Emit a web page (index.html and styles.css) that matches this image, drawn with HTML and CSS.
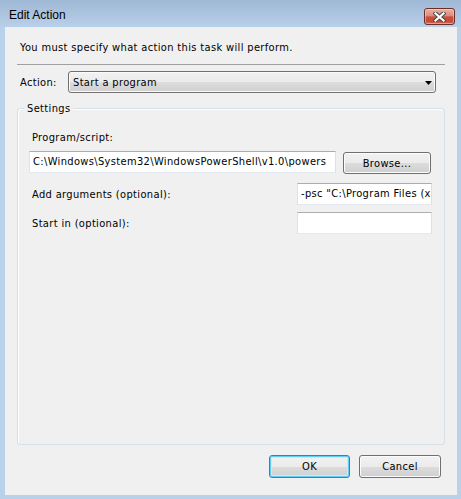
FILE: index.html
```html
<!DOCTYPE html>
<html>
<head>
<meta charset="utf-8">
<title>Edit Action</title>
<link rel="stylesheet" href="styles.css">
</head>
<body>
<div class="window">
  <div class="titlebar">
    <span class="title">Edit Action</span>
    <div class="close">
      <svg width="13" height="10" viewBox="0 0 13 10">
        <path d="M2.5 1.5 L10.5 8.5 M10.5 1.5 L2.5 8.5" stroke="#4a4a4a" stroke-width="4.2" stroke-linecap="square" fill="none"/>
        <path d="M2.5 1.5 L10.5 8.5 M10.5 1.5 L2.5 8.5" stroke="#ffffff" stroke-width="2.2" stroke-linecap="square" fill="none"/>
      </svg>
    </div>
  </div>
  <div class="client">
    <p class="instr">You must specify what action this task will perform.</p>
    <div class="sep"></div>
    <div class="action-row">
      <span class="action-lbl">Action:</span>
      <div class="combo">
        <span class="combo-text">Start a program</span>
        <svg class="combo-arrow" width="7" height="4" viewBox="0 0 7 4"><polygon points="0,0 7,0 3.5,4" fill="#000"/></svg>
      </div>
    </div>
    <div class="group">
      <span class="group-label">Settings</span>
      <div class="prog-lbl">Program/script:</div>
      <div class="prog-row">
        <div class="textbox prog-box">C:\Windows\System32\WindowsPowerShell\v1.0\powers</div>
        <div class="btn browse">Browse...</div>
      </div>
      <div class="field-row args-row">
        <span class="field-lbl">Add arguments (optional):</span>
        <div class="textbox side-box">-psc "C:\Program Files (x</div>
      </div>
      <div class="field-row start-row">
        <span class="field-lbl">Start in (optional):</span>
        <div class="textbox side-box"></div>
      </div>
    </div>
    <div class="buttons">
      <div class="btn ok">OK</div>
      <div class="btn cancel">Cancel</div>
    </div>
  </div>
</div>
</body>
</html>
```

FILE: styles.css
```css
html, body {
  margin: 0;
  padding: 0;
}
body {
  width: 461px;
  height: 499px;
  overflow: hidden;
  font-family: "DejaVu Sans Condensed", "DejaVu Sans", sans-serif;
  color: #000;
}
.window {
  width: 461px;
  height: 499px;
  background: #bad1ea;
  display: flex;
  flex-direction: column;
}
.titlebar {
  height: 27px;
  box-sizing: border-box;
  padding: 8px 6px 0 9px;
  display: flex;
  align-items: flex-start;
  background: linear-gradient(to bottom, #9fb8d5 0%, #aec6e1 60%, #b9d0ea 100%);
}
.title {
  font-family: "Liberation Sans", Arial, sans-serif;
  font-size: 12px;
  line-height: 14px;
  color: #000;
}
.close {
  margin-left: auto;
  width: 31px;
  height: 17px;
  box-sizing: border-box;
  border: 1px solid #6b2f2a;
  border-radius: 3px;
  background: linear-gradient(to bottom, #eab2a6 0%, #db8c7c 45%, #c8533f 52%, #c24b38 80%, #d06a55 100%);
  box-shadow: inset 0 0 0 1px rgba(255, 230, 220, 0.45);
  display: flex;
  align-items: center;
  justify-content: center;
}
.close svg {
  display: block;
}
.client {
  margin: 0 4px 0 5px;
  height: 468px;
  box-sizing: border-box;
  background: #f0f0f0;
  padding-top: 14px;
  font-size: 11px;
  letter-spacing: 0.35px;
}
.instr {
  margin: 0 0 0 15px;
  line-height: 13px;
}
.sep {
  margin: 10px 12px 0;
  border-top: 1px solid #a0a0a0;
}
.action-row {
  display: flex;
  align-items: center;
  margin: 6px 0 0 15px;
  height: 22px;
}
.action-lbl {
  width: 48px;
  line-height: 13px;
}
.combo {
  width: 368px;
  height: 22px;
  box-sizing: border-box;
  border: 1px solid #707070;
  border-radius: 3px;
  background: linear-gradient(to bottom, #f2f2f2 0%, #ebebeb 50%, #dddddd 50%, #cfcfcf 100%);
  box-shadow: inset 0 0 0 1px #fbfbfb;
  display: flex;
  align-items: center;
  padding: 0 3px 0 4px;
}
.combo-text {
  line-height: 13px;
}
.combo-arrow {
  margin-left: auto;
  display: block;
  margin-top: 1px;
}
.group {
  position: relative;
  margin: 15px 12px 0;
  height: 337px;
  box-sizing: border-box;
  border: 1px solid #d5dfe5;
  border-radius: 3px;
  box-shadow: inset 1px 1px 0 #ffffff;
  padding: 22px 12px 0 11px;
}
.group-label {
  position: absolute;
  top: -7px;
  left: 6px;
  padding: 0 3px;
  line-height: 13px;
  background: #f0f0f0;
}
.prog-lbl {
  margin-left: 3px;
  line-height: 13px;
}
.prog-row {
  display: flex;
  align-items: flex-start;
  margin-top: 7px;
}
.textbox {
  height: 22px;
  box-sizing: border-box;
  border: 1px solid;
  border-color: #abadb3 #dbdfe6 #e3e9ef #e2e3ea;
  background: #ffffff;
  white-space: nowrap;
  overflow: hidden;
  line-height: 20px;
  padding: 0 2px 0 3px;
}
.prog-box {
  width: 307px;
}
.browse {
  width: 88px;
  height: 22px;
  margin-left: 7px;
  margin-top: 1px;
}
.field-row {
  display: flex;
  justify-content: space-between;
  align-items: flex-start;
}
.args-row {
  margin-top: 9px;
}
.start-row {
  margin-top: 7px;
}
.field-lbl {
  margin-left: 3px;
  padding-top: 5px;
  line-height: 13px;
}
.side-box {
  width: 135px;
}
.btn {
  box-sizing: border-box;
  border: 1px solid #707070;
  border-radius: 3px;
  background: linear-gradient(to bottom, #f2f2f2 0%, #ebebeb 50%, #dddddd 50%, #cfcfcf 100%);
  box-shadow: inset 0 0 0 1px #fcfcfc;
  display: flex;
  align-items: center;
  justify-content: center;
  line-height: 13px;
}
.buttons {
  display: flex;
  justify-content: flex-end;
  gap: 9px;
  margin: 10px 16px 0 0;
}
.ok {
  width: 81px;
  height: 23px;
  border-color: #3c7fb1;
  box-shadow: inset 0 0 0 1px #62cdf5, inset 0 0 0 2px #c4ecfb;
}
.cancel {
  width: 82px;
  height: 23px;
}
```
